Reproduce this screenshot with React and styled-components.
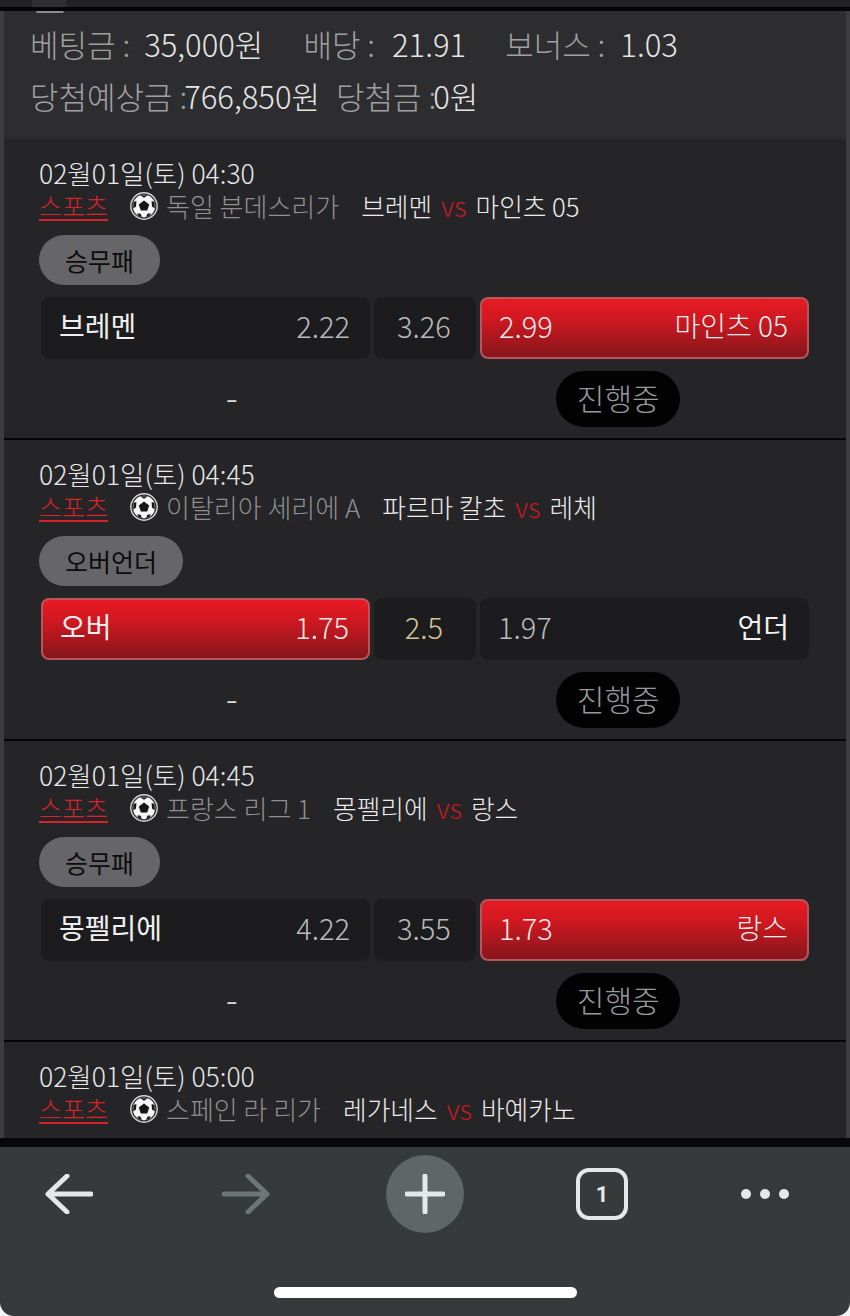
import React from 'react'
import styled, { createGlobalStyle } from 'styled-components'

const GlobalStyle = createGlobalStyle`
  html, body {
    margin: 0;
    padding: 0;
    background: #f4f4f4;
  }
  body {
    font-family: "Noto Sans CJK KR", "Noto Sans", sans-serif;
    font-weight: 300;
  }
`

const Phone = styled.div`
  width: 850px;
  height: 1316px;
  overflow: hidden;
  display: flex;
  flex-direction: column;
`

const Viewport = styled.div`
  height: 1147px;
  flex: none;
  overflow: hidden;
  background: #3d3d3f;
  padding: 0 4px;
  box-sizing: border-box;
  border-bottom: 9px solid #08080a;
`

const TopStrip = styled.div`
  height: 7px;
  margin: 0 -4px;
  background: linear-gradient(to right, #232325 32px, #303032 32px, #303032 66px, #232325 66px);
  border-bottom: 4px solid #050506;
`

const Summary = styled.div`
  height: 128px;
  box-sizing: border-box;
  background: #2d2d30;
  padding: 0 0 0 26px;
  color: #a0a0a2;
`

const PillSliver = styled.div`
  width: 28px;
  height: 2px;
  margin-left: 6px;
  background: #8c8c8e;
  border-radius: 0 0 14px 14px;
`

const SummaryRow = styled.div`
  display: flex;
  height: 51px;
  align-items: center;
  font-size: 31px;
  line-height: 51px;
  white-space: nowrap;
  margin-top: ${p => p.$top || 0}px;
`

const SummaryItem = styled.span`
  margin-right: ${p => p.$gap || 0}px;
`

const Value = styled.span`
  color: #e6e6e6;
  margin-left: ${p => p.$left || 0}px;
`

const Card = styled.div`
  height: 301px;
  box-sizing: border-box;
  background: #252528;
  border-bottom: 2px solid #050506;
  padding: 18px 36px 0 35px;
`

const DateLine = styled.div`
  color: #e8e8e8;
  font-size: 26.5px;
  line-height: 32px;
  white-space: nowrap;
`

const MetaRow = styled.div`
  display: flex;
  align-items: center;
  height: 33px;
  line-height: 33px;
  font-size: 26px;
  white-space: nowrap;
`

const Category = styled.span`
  color: #d8232a;
  font-size: 25px;
  text-decoration: underline;
  text-underline-offset: 3px;
  margin-right: 22px;
`

const Ball = styled.svg`
  width: 28px;
  height: 28px;
  flex: none;
  margin-right: 8px;
`

const League = styled.span`
  color: #8f8f91;
  margin-right: 22px;
`

const Team = styled.span`
  color: #ececec;
  font-size: 25.7px;
`

const Versus = styled.span`
  color: #c8191f;
  font-size: 27px;
  margin: 0 9px;
`

const MarketPill = styled.div`
  display: ${p => (p.$blank ? 'block' : 'inline-flex')};
  align-items: center;
  justify-content: center;
  height: 50px;
  width: ${p => (p.$blank ? '122px' : 'auto')};
  margin-top: 13px;
  padding: 0 26px;
  box-sizing: ${p => (p.$blank ? 'border-box' : 'content-box')};
  background: #666668;
  border-radius: 25px;
  color: #0c0c0c;
  font-size: 25px;
  font-weight: 400;
`

const OddsRow = styled.div`
  display: grid;
  grid-template-columns: 1fr 102px 1fr;
  gap: 4px;
  height: 62px;
  margin: 12px 1px 0 2px;
`

const OddsBox = styled.div`
  display: flex;
  align-items: center;
  justify-content: ${p => (p.$center ? 'center' : 'space-between')};
  box-sizing: border-box;
  padding: 0 ${p => (p.$center ? 2 : 19)}px 6px ${p => (p.$center ? 0 : 17)}px;
  border-radius: 8px;
  font-size: 29px;
  color: #bababc;
  background: #1c1c1e;
  border: 1px solid #1c1c1e;
  white-space: nowrap;

  ${p => p.$picked && `
    color: #f6e6e6;
    background: linear-gradient(to bottom, #e71a24 0%, #d01820 35%, #85161c 100%);
    border: 2px solid #b9565c;
  `}
`

const Name = styled.span`
  color: #f0f0f0;
  font-size: 28px;
  font-weight: ${p => (p.$thin ? 300 : 400)};
`

const Line = styled.span`
  color: #d0c49a;
`

const StatusRow = styled.div`
  display: grid;
  grid-template-columns: 1fr 1fr;
  margin-top: 12px;
  align-items: center;
`

const Dash = styled.div`
  text-align: center;
  color: #dcdcdc;
  font-size: 36px;
  line-height: 36px;
  padding-bottom: 8px;
`

const Status = styled.div`
  justify-self: center;
  display: flex;
  align-items: center;
  justify-content: center;
  width: 124px;
  height: 56px;
  box-sizing: border-box;
  margin-left: 2px;
  padding-bottom: 4px;
  border-radius: 28px;
  background: #020203;
  color: #9a9a9c;
  font-size: 30px;
`

const Toolbar = styled.div`
  flex: 1;
  background: #363a3b;
  border-radius: 0 0 14px 14px;
  display: flex;
  flex-direction: column;
`

const ToolIcons = styled.div`
  display: grid;
  grid-template-columns: 138px 216px 142px 212px 114px;
  align-items: center;
  justify-items: center;
  height: 94px;
`

const ArrowSvg = styled.svg`
  transform: ${p => (p.$flip ? 'scaleX(-1)' : 'none')};
`

const PlusCircle = styled.div`
  width: 78px;
  height: 78px;
  border-radius: 50%;
  background: #606566;
  display: flex;
  align-items: center;
  justify-content: center;
`

const TabCount = styled.div`
  width: 52px;
  height: 52px;
  box-sizing: border-box;
  border: 4px solid #e4e8e8;
  border-radius: 13px;
  display: flex;
  align-items: center;
  justify-content: center;
  color: #e4e8e8;
  font-family: "Roboto", sans-serif;
  font-size: 22px;
  font-weight: 700;
`

const Dots = styled.div`
  display: flex;
  gap: 9px;
`

const Dot = styled.span`
  width: 10px;
  height: 10px;
  border-radius: 50%;
  background: #e4e8e8;
`

const HomeBar = styled.div`
  width: 303px;
  height: 11px;
  margin: 46px auto 0;
  background: #fff;
  border-radius: 6px;
`

const SoccerBall = () => (
  <Ball viewBox="0 0 28 28">
    <circle cx="14" cy="14" r="13.2" fill="#2a2a2c" stroke="#d4d4d4" strokeWidth="1.4" />
    <circle cx="14" cy="14" r="11.2" fill="#f6f6f6" />
    <polygon points="14,8.6 19.2,12.4 17.2,18.4 10.8,18.4 8.8,12.4" fill="#161616" />
    <path d="M10.2 3.2 L17.8 3.2 L14 5.8 Z" fill="#161616" />
    <path d="M3.4 10 L6.4 9 L6 14.6 L3.2 16.6 Z" fill="#161616" />
    <path d="M24.6 10 L21.6 9 L22 14.6 L24.8 16.6 Z" fill="#161616" />
    <path d="M7 21.6 L10.4 21.4 L12 25 L8.8 24.2 Z" fill="#161616" />
    <path d="M21 21.6 L17.6 21.4 L16 25 L19.2 24.2 Z" fill="#161616" />
  </Ball>
)

const Arrow = ({ color, flip }) => (
  <ArrowSvg $flip={flip} width="48" height="40" viewBox="0 0 48 40">
    <path d="M22 2 L3 20 L22 38 M3 20 H46" fill="none" stroke={color} strokeWidth="5" strokeLinecap="round" strokeLinejoin="round" />
  </ArrowSvg>
)

const PlusIcon = () => (
  <svg width="40" height="40" viewBox="0 0 40 40">
    <path d="M20 2 V38 M2 20 H38" fill="none" stroke="#e4e8e8" strokeWidth="5" strokeLinecap="round" />
  </svg>
)

const matches = [
  {
    time: '02월01일(토) 04:30', league: '독일 분데스리가', home: '브레멘', away: '마인츠 05',
    market: '승무패', left: '2.22', mid: '3.26', right: '2.99', picked: 'right',
  },
  {
    time: '02월01일(토) 04:45', league: '이탈리아 세리에 A', home: '파르마 칼초', away: '레체',
    market: '오버언더', leftName: '오버', rightName: '언더', left: '1.75', mid: '2.5', right: '1.97', picked: 'left', isLine: true,
  },
  {
    time: '02월01일(토) 04:45', league: '프랑스 리그 1', home: '몽펠리에', away: '랑스',
    market: '승무패', left: '4.22', mid: '3.55', right: '1.73', picked: 'right',
  },
  {
    time: '02월01일(토) 05:00', league: '스페인 라 리가', home: '레가네스', away: '바예카노',
  },
]

function MatchCard({ match }) {
  const leftName = match.leftName || match.home
  const rightName = match.rightName || match.away
  return (
    <Card>
      <DateLine>{match.time}</DateLine>
      <MetaRow>
        <Category>스포츠</Category>
        <SoccerBall />
        <League>{match.league}</League>
        <Team>{match.home}</Team>
        <Versus>vs</Versus>
        <Team>{match.away}</Team>
      </MetaRow>
      {/* the last card runs under the toolbar, only the top of its pill shows */}
      {!match.market && <MarketPill $blank />}
      {match.market && (
        <>
          <MarketPill>{match.market}</MarketPill>
          <OddsRow>
            <OddsBox $picked={match.picked === 'left'}>
              <Name>{leftName}</Name>
              {match.left}
            </OddsBox>
            <OddsBox $center>
              {match.isLine ? <Line>{match.mid}</Line> : match.mid}
            </OddsBox>
            <OddsBox $picked={match.picked === 'right'}>
              {match.right}
              <Name $thin={match.picked === 'right'}>{rightName}</Name>
            </OddsBox>
          </OddsRow>
          <StatusRow>
            <Dash>-</Dash>
            <Status>진행중</Status>
          </StatusRow>
        </>
      )}
    </Card>
  )
}

export default function App() {
  return (
    <Phone>
      <GlobalStyle />
      <Viewport>
        <TopStrip />
        <Summary>
          <PillSliver />
          <SummaryRow $top={5}>
            <SummaryItem $gap={40}>베팅금 :<Value $left={14}>35,000원</Value></SummaryItem>
            <SummaryItem $gap={39}>배당 :<Value $left={17}>21.91</Value></SummaryItem>
            <SummaryItem>보너스 :<Value $left={15}>1.03</Value></SummaryItem>
          </SummaryRow>
          <SummaryRow $top={1}>
            <SummaryItem $gap={16}>당첨예상금 :<Value $left={-3}>766,850원</Value></SummaryItem>
            <SummaryItem>당첨금 :<Value $left={-3}>0원</Value></SummaryItem>
          </SummaryRow>
        </Summary>
        {matches.map(match => (
          <MatchCard key={match.time + match.home} match={match} />
        ))}
      </Viewport>
      <Toolbar>
        <ToolIcons>
          <Arrow color="#e4e8e8" />
          <Arrow color="#6f7475" flip />
          <PlusCircle><PlusIcon /></PlusCircle>
          <TabCount>1</TabCount>
          <Dots><Dot /><Dot /><Dot /></Dots>
        </ToolIcons>
        <HomeBar />
      </Toolbar>
    </Phone>
  )
}
